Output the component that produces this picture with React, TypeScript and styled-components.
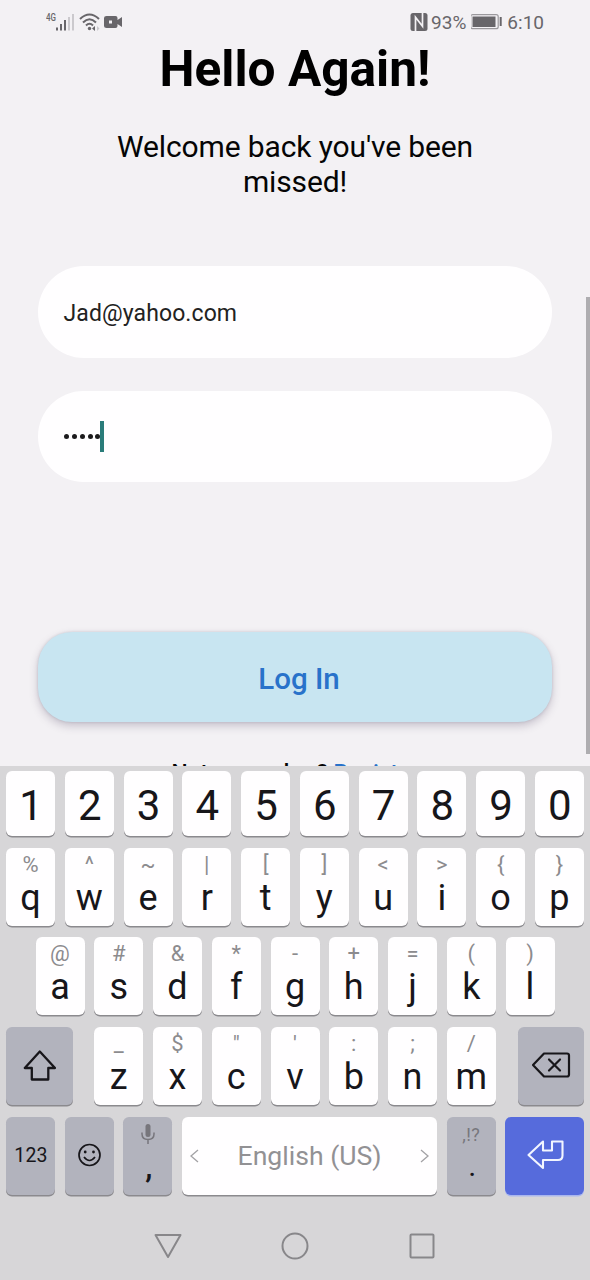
import React from 'react';
import styled, { createGlobalStyle } from 'styled-components';

const Global = createGlobalStyle`
  * { box-sizing: border-box; }
  body { margin: 0; background: #f3f1f4; font-family: Roboto, sans-serif; }
`;

const Phone = styled.div`
  width: 590px;
  height: 1280px;
  display: flex;
  flex-direction: column;
  overflow: hidden;
  background: #f3f1f4;
`;

const StatusBar = styled.header`
  height: 40px;
  flex: none;
  display: flex;
  justify-content: space-between;
  padding: 0 46px;
  color: #68666a;
`;

const StatusGroup = styled.div`
  display: flex;
  align-items: center;
  gap: 3px;
  height: 44px;
`;

const StatusText = styled.span<{ $after?: number }>`
  font-size: 19px;
  line-height: 24px;
  padding-top: 2px;
  margin-right: ${p => p.$after ?? 0}px;
`;

const Screen = styled.main`
  height: 726px;
  flex: none;
  display: flex;
  overflow: hidden;
`;

const Form = styled.form`
  flex: 1;
  display: flex;
  flex-direction: column;
  align-items: center;
  padding-left: 4px;
`;

const Title = styled.h1`
  margin: 0;
  font-size: 49.6px;
  line-height: 58px;
  font-weight: 700;
  color: #000;
`;

const Subtitle = styled.p`
  margin: 31px 0 0;
  width: 400px;
  text-align: center;
  font-size: 30px;
  line-height: 35px;
  letter-spacing: -0.13px;
  color: #050505;
`;

const Field = styled.div<{ $top: number; $height: number; $nudge: number }>`
  width: 514px;
  height: ${p => p.$height}px;
  flex: none;
  margin-top: ${p => p.$top}px;
  border-radius: 46px;
  background: #fffeff;
  display: flex;
  align-items: center;
  padding: ${p => p.$nudge}px 25.5px 0;
  font-size: 23px;
  letter-spacing: 0.1px;
  color: #222;
`;

const Dots = styled.div`
  display: flex;
  gap: 2.8px;
  padding-left: 0.8px;
`;

const Dot = styled.span`
  width: 5px;
  height: 5px;
  border-radius: 50%;
  background: #1c1b1d;
`;

const Caret = styled.span`
  width: 4px;
  height: 31px;
  background: #2a7c7a;
`;

const LoginButton = styled.button`
  width: 514px;
  height: 90px;
  flex: none;
  margin-top: 150px;
  border: 0;
  border-radius: 34px;
  background: #c8e5f1;
  box-shadow: 0 4px 8px rgba(70, 60, 90, 0.25), 0 0 3px rgba(70, 60, 90, 0.18);
  font-family: inherit;
  font-size: 29.5px;
  font-weight: 500;
  color: #2872ca;
  padding: 4px 0 0 8px;
`;

const Footer = styled.p`
  margin: 37px 0 0;
  font-size: 22.8px;
  line-height: 27px;
  font-weight: 500;
  color: #050505;
  white-space: nowrap;
`;

const Link = styled.a`
  color: #2872ca;
`;

const ScrollThumb = styled.div`
  width: 4px;
  height: 457px;
  flex: none;
  margin-top: 257px;
  background: #aeadb0;
`;

const Keyboard = styled.section`
  flex: none;
  height: 514px;
  background: #d7d6d8;
  padding: 5px 6px 0;
  display: flex;
  flex-direction: column;
`;

const KeyRow = styled.div<{ $height?: number; $inset?: number; $after?: number }>`
  display: flex;
  flex: none;
  justify-content: space-between;
  height: ${p => p.$height ?? 78}px;
  padding: 0 ${p => p.$inset ?? 0}px;
  margin-bottom: ${p => p.$after ?? 12}px;
`;

const LetterGroup = styled.div`
  display: flex;
  gap: 9.75px;
`;

const Key = styled.div<{ $width?: number; $tone?: 'light' | 'dark' | 'accent' }>`
  width: ${p => p.$width ?? 49}px;
  height: 100%;
  border-radius: 6px;
  background: ${p => (p.$tone === 'dark' ? '#b2b3bd' : p.$tone === 'accent' ? '#566bdc' : '#fffeff')};
  box-shadow: 0 1.5px 0 ${p => (p.$tone === 'accent' ? '#a9b6ee' : '#8b8a8e')};
  display: flex;
  flex-direction: column;
  align-items: center;
  color: #17161a;
`;

const Digit = styled.span`
  font-size: 42px;
  line-height: 70px;
  padding-left: 1px;
`;

const Hint = styled.span`
  font-size: 22px;
  line-height: 26px;
  height: 26px;
  margin-top: 4px;
  color: #8c8b8e;
`;

const Letter = styled.span`
  font-size: 36px;
  line-height: 40px;
`;

const Center = styled.div`
  height: 100%;
  display: flex;
  align-items: center;
  justify-content: center;
  padding-bottom: 2px;
`;

const ModeLabel = styled.span`
  padding-top: 1px;
  padding-left: 1px;
  font-size: 19.5px;
  letter-spacing: 0.2px;
`;

const SpaceContent = styled.div`
  width: 100%;
  height: 100%;
  display: flex;
  align-items: center;
  justify-content: space-between;
  padding: 0 8px 1px;
  font-size: 26.6px;
  color: #929194;
`;

const NavBar = styled.nav`
  display: flex;
  flex: none;
  justify-content: center;
  align-items: center;
  gap: 99.5px;
  height: 101px;
  padding-right: 2px;
`;

const Signal = () => (
  <svg width="30" height="24" viewBox="0 0 30 24">
    <text x="0" y="11" fontSize="11.5" fontWeight="500" fontFamily="Roboto" fill="#68666a" textLength="10" lengthAdjust="spacingAndGlyphs">4G</text>
    <path d="M11 17.500v3M15 14v6.500M19 10v10.500" stroke="#68666a" strokeWidth="2" />
    <path d="M23 7v13.500M27 4v16.500" stroke="#cbc9cd" strokeWidth="2" />
  </svg>
);

const Wifi = () => (
  <svg width="22" height="20" viewBox="0 0 22 20" fill="none" stroke="#68666a">
    <path d="M1 7Q10.500-2 20 7" strokeWidth="2" />
    <path d="M4 10.500Q10.500 4 17 10.500" strokeWidth="2" />
    <path d="M7 13.500Q10.500 10 14 13.500" strokeWidth="2" />
    <circle cx="10.500" cy="16.500" r="1.700" fill="#68666a" stroke="none" />
    <path d="M13 16.500l3-2.500v5z" fill="#68666a" stroke="none" />
    <path d="M18 14l2.500 2.500L18 19z" fill="#cbc9cd" stroke="none" />
  </svg>
);

const Camera = () => (
  <svg width="19" height="12" viewBox="0 0 19 12" fill="#68666a">
    <path fillRule="evenodd" d="M2.500 0h9Q13.500 0 13.500 2v2L18 1v10l-4.500-3v2q0 2-2 2h-9Q0 12 0 10V2Q0 0 2.500 0ZM5 4.500v3h3v-3Z" />
  </svg>
);

const Nfc = () => (
  <svg width="18" height="18" viewBox="0 0 18 18">
    <rect x="0.500" y="0" width="17" height="18" rx="2.500" fill="#68666a" />
    <path d="M5.500 18V4.200L12.500 13.200V0" fill="none" stroke="#f3f1f4" strokeWidth="1.700" />
  </svg>
);

const Battery = () => (
  <svg width="33" height="16" viewBox="1 0 33 16">
    <rect x="0.700" y="0.700" width="27.500" height="14" rx="2" fill="none" stroke="#9a989c" strokeWidth="1.200" />
    <rect x="2.500" y="2.500" width="23" height="10.500" fill="#68666a" />
    <path d="M30.700 3v9" stroke="#68666a" strokeWidth="2" />
  </svg>
);

const ShiftIcon = () => (
  <svg width="34" height="32" viewBox="0 0 34 32" fill="none" stroke="#17161a" strokeWidth="2.300" strokeLinejoin="round">
    <path d="M17.800 2.500L33 19H26.300V30.500H9.800V19H2.800Z" />
  </svg>
);

const BackspaceIcon = () => (
  <svg width="40" height="26" viewBox="0 0 40 26" fill="none" stroke="#17161a" strokeWidth="2.200" strokeLinejoin="round" strokeLinecap="round">
    <path d="M13 1.500H36Q38 1.500 38 3.500V22.500Q38 24.500 36 24.500H13L2 13Z" />
    <path d="M18 7.500L29 18.500M29 7.500L18 18.500" />
  </svg>
);

const SmileIcon = () => (
  <svg width="24" height="24" viewBox="0 0 24 24" fill="none" stroke="#17161a">
    <circle cx="12.500" cy="12" r="10.500" strokeWidth="1.700" />
    <circle cx="8.200" cy="9" r="1.400" fill="#17161a" stroke="none" />
    <circle cx="16.500" cy="9" r="1.400" fill="#17161a" stroke="none" />
    <path d="M7 14Q12.500 21 18 14" strokeWidth="1.700" />
  </svg>
);

const MicIcon = () => (
  <svg width="14" height="21" viewBox="0 0 14 21" fill="none" stroke="#77767c" strokeWidth="1.500">
    <rect x="4.500" y="0" width="5" height="13" rx="2.500" fill="#77767c" stroke="none" />
    <path d="M1 8.500V10Q1 15.500 7 15.500T13 10V8.500M7 15.500V20" />
  </svg>
);

const EnterIcon = () => (
  <svg width="38" height="30" viewBox="0 0 38 30" fill="none" stroke="#f2f5ff" strokeWidth="2.100" strokeLinejoin="round">
    <path d="M2.500 15L17 1.500V10.500H26V1.500H36.500V15.500Q36.500 20 32 20H17V28Z" />
  </svg>
);

const Chevron = ({ flip = false }: { flip?: boolean }) => (
  <svg width="9" height="14" viewBox="0 0 9 14" fill="none" stroke="#a3a2a5" strokeWidth="1.300">
    <path d={flip ? 'M1 1L8 7L1 13' : 'M8 1L1 7L8 13'} />
  </svg>
);

const MicSlot = styled.div`
  height: 30px;
  padding-top: 7px;
`;

const Punct = styled.span<{ $size: number }>`
  font-size: ${p => p.$size}px;
  line-height: 40px;
  padding-left: 2px;
  font-weight: 500;
`;

const PunctHint = styled.span`
  height: 31px;
  padding-top: 5px;
  font-size: 18px;
  line-height: 26px;
  letter-spacing: 0.4px;
  color: #77767c;
`;

type Pair = [string, string];

const TOP: Pair[] = [['q', '%'], ['w', '^'], ['e', '~'], ['r', '|'], ['t', '['], ['y', ']'], ['u', '<'], ['i', '>'], ['o', '{'], ['p', '}']];
const HOME: Pair[] = [['a', '@'], ['s', '#'], ['d', '&'], ['f', '*'], ['g', '-'], ['h', '+'], ['j', '='], ['k', '('], ['l', ')']];
const BOTTOM: Pair[] = [['z', '_'], ['x', '$'], ['c', '"'], ['v', "'"], ['b', ':'], ['n', ';'], ['m', '/']];

const LetterKey = ({ pair: [letter, hint] }: { pair: Pair }) => (
  <Key>
    <Hint>{hint}</Hint>
    <Letter>{letter}</Letter>
  </Key>
);

export default function App() {
  return (
    <Phone>
      <Global />
      <StatusBar>
        <StatusGroup>
          <Signal />
          <Wifi />
          <Camera />
        </StatusGroup>
        <StatusGroup>
          <Nfc />
          <StatusText $after={2}>93%</StatusText>
          <Battery />
          <StatusText>6:10</StatusText>
        </StatusGroup>
      </StatusBar>
      <Screen>
        <Form>
          <Title>Hello Again!</Title>
          <Subtitle>Welcome back you've been missed!</Subtitle>
          <Field $top={67} $height={92} $nudge={2}>Jad@yahoo.com</Field>
          <Field $top={33} $height={91} $nudge={0}>
            <Dots>{[0, 1, 2, 3, 4].map(i => <Dot key={i} />)}</Dots>
            <Caret />
          </Field>
          <LoginButton type="button">Log In</LoginButton>
          <Footer>Not a member? <Link>Register</Link></Footer>
        </Form>
        <ScrollThumb />
      </Screen>
      <Keyboard>
        <KeyRow $height={65}>
          {'1234567890'.split('').map(d => <Key key={d}><Digit>{d}</Digit></Key>)}
        </KeyRow>
        <KeyRow $after={11}>{TOP.map(p => <LetterKey key={p[0]} pair={p} />)}</KeyRow>
        <KeyRow $inset={29.5}>{HOME.map(p => <LetterKey key={p[0]} pair={p} />)}</KeyRow>
        <KeyRow>
          <Key $width={66.5} $tone="dark"><Center><ShiftIcon /></Center></Key>
          <LetterGroup>{BOTTOM.map(p => <LetterKey key={p[0]} pair={p} />)}</LetterGroup>
          <Key $width={66.5} $tone="dark"><Center><BackspaceIcon /></Center></Key>
        </KeyRow>
        <KeyRow $after={0}>
          <Key $tone="dark"><Center><ModeLabel>123</ModeLabel></Center></Key>
          <Key $tone="dark"><Center><SmileIcon /></Center></Key>
          <Key $tone="dark">
            <MicSlot><MicIcon /></MicSlot>
            <Punct $size={32}>,</Punct>
          </Key>
          <Key $width={255}>
            <SpaceContent><Chevron /><span>English (US)</span><Chevron flip /></SpaceContent>
          </Key>
          <Key $tone="dark">
            <PunctHint>,!?</PunctHint>
            <Punct $size={25}>.</Punct>
          </Key>
          <Key $width={78.5} $tone="accent"><Center><EnterIcon /></Center></Key>
        </KeyRow>
        <NavBar>
          <svg width="28" height="26" viewBox="0 0 28 26" fill="none" stroke="#88878a" strokeWidth="2" strokeLinejoin="round"><path d="M1.500 2H26.500L14 24Z" /></svg>
          <svg width="28" height="28" viewBox="0 0 28 28" fill="none" stroke="#88878a" strokeWidth="2"><circle cx="14" cy="14" r="12.500" /></svg>
          <svg width="26" height="26" viewBox="0 0 26 26" fill="none" stroke="#88878a" strokeWidth="2"><rect x="1.500" y="1.500" width="23" height="23" rx="1" /></svg>
        </NavBar>
      </Keyboard>
    </Phone>
  );
}
